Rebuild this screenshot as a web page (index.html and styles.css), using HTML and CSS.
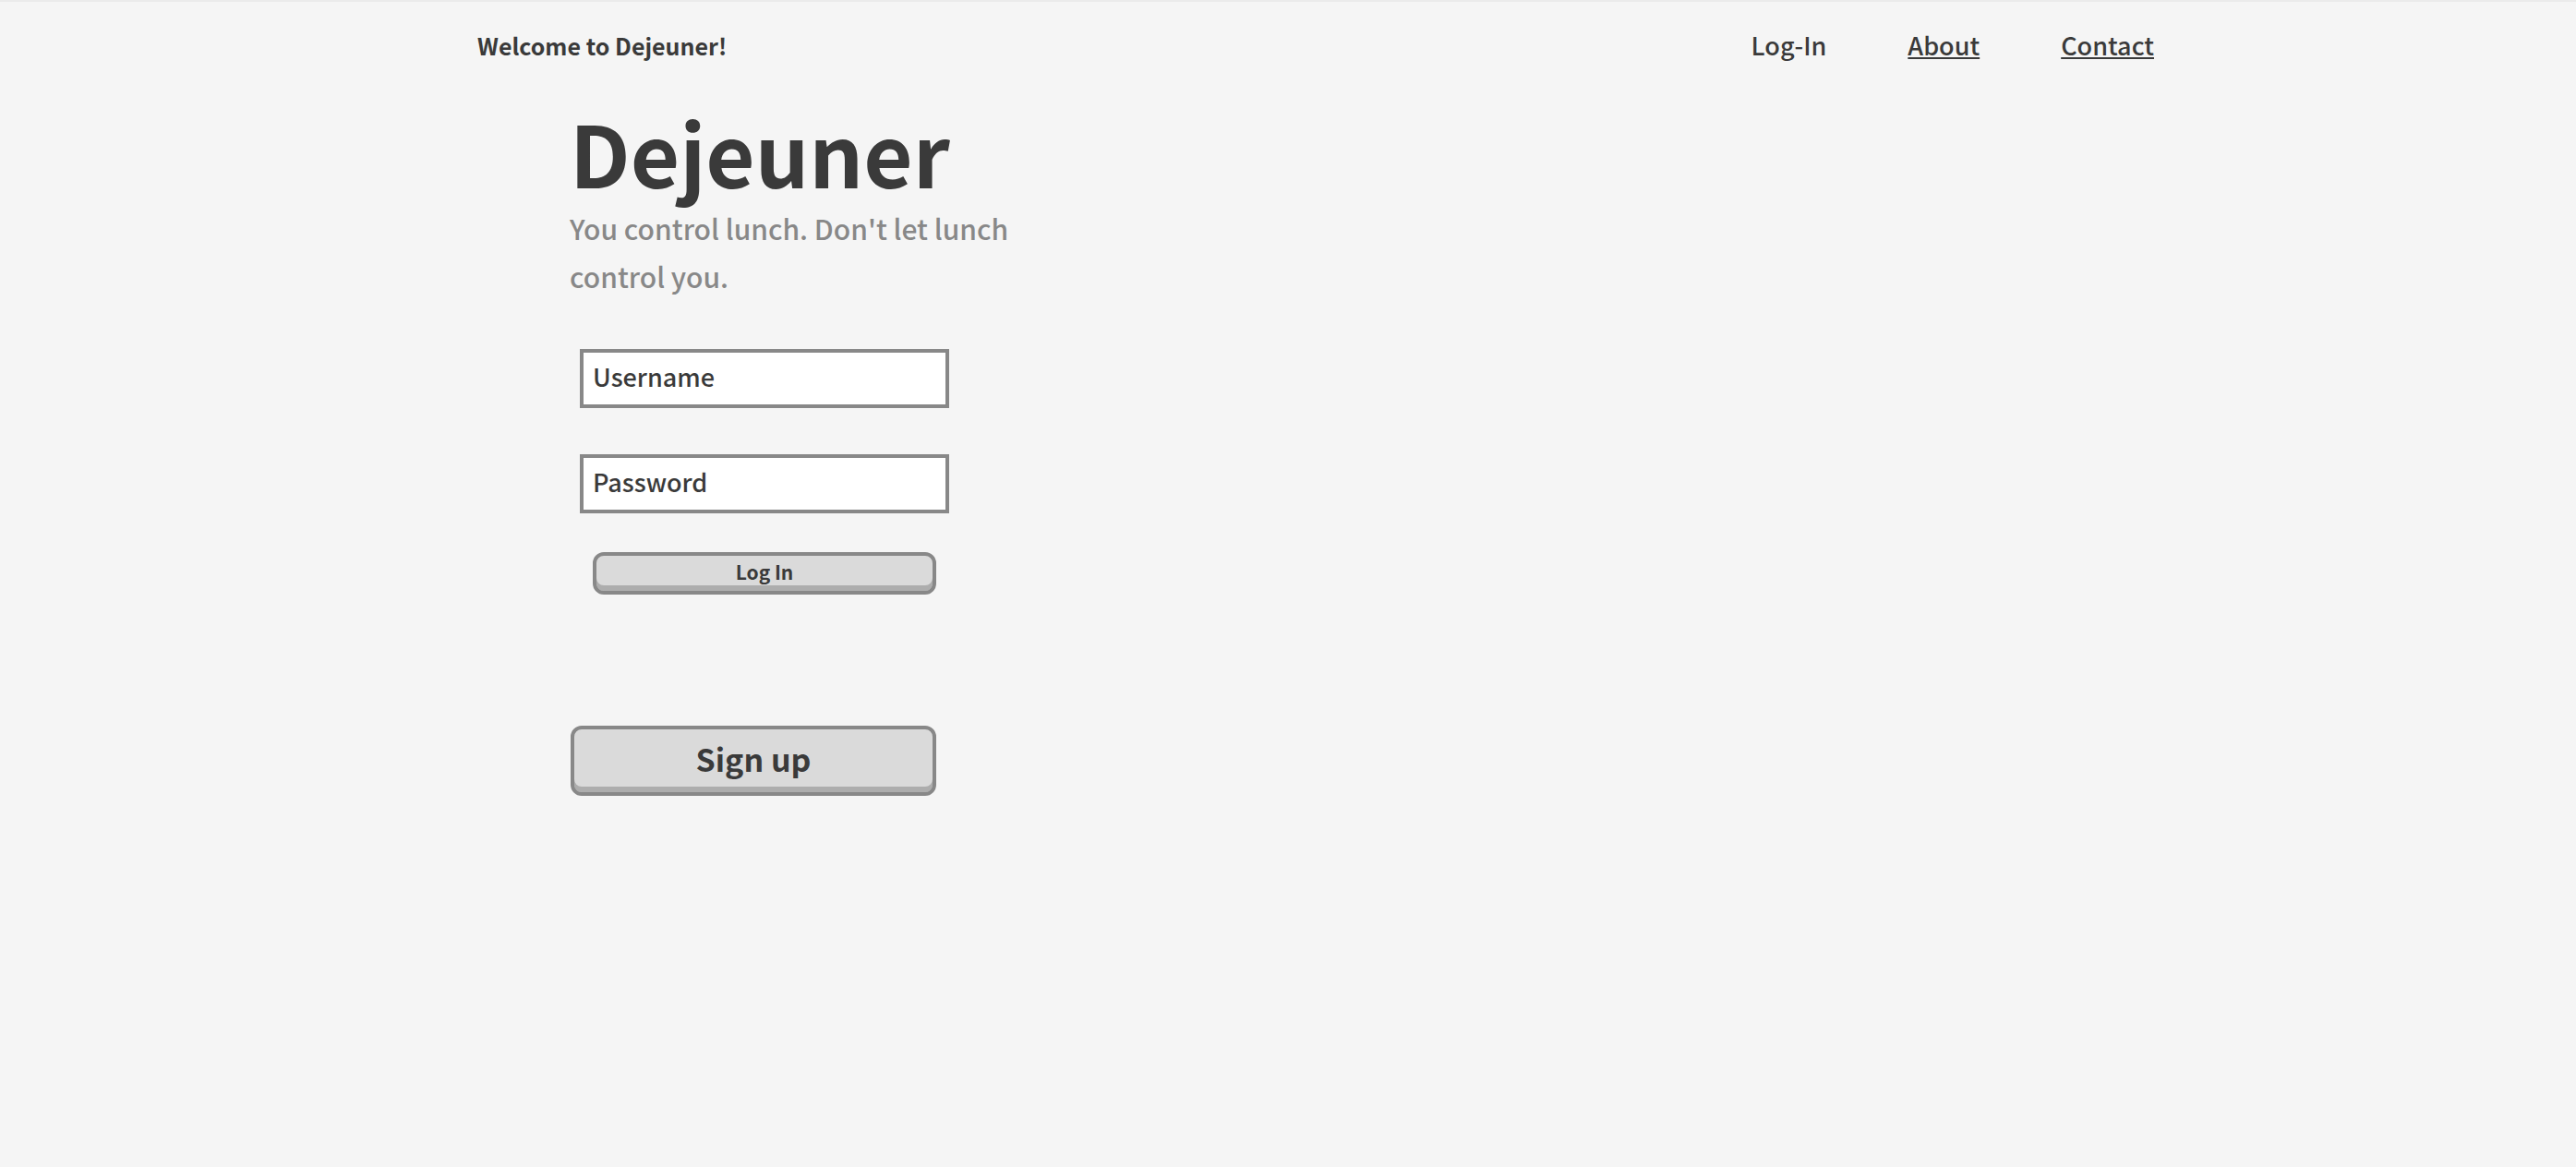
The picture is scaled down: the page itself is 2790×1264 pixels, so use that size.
FILE: index.html
```html
<!DOCTYPE html>
<html lang="en">
<head>
<meta charset="utf-8">
<title>Dejeuner</title>
<link rel="stylesheet" href="styles.css">
</head>
<body>
<header class="topbar">
  <p class="welcome">Welcome to Dejeuner!</p>
  <nav class="menu">
    <span>Log-In</span>
    <a href="#about">About</a>
    <a href="#contact">Contact</a>
  </nav>
</header>
<main class="content">
  <h1 class="title">Dejeuner</h1>
  <p class="tagline">You control lunch. Don't let lunch control you.</p>
  <form class="login">
    <input class="field" type="text" placeholder="Username" aria-label="Username">
    <input class="field" type="password" placeholder="Password" aria-label="Password">
    <button class="button button-login" type="submit">Log In</button>
  </form>
  <button class="button button-signup" type="button">Sign up</button>
</main>
</body>
</html>
```
FILE: styles.css
```css
* {
  box-sizing: border-box;
}

body {
  margin: 0;
  border-top: 2px solid #ebebeb;
  background: #f5f5f5;
  color: #3a3a3a;
  font-family: "Noto Sans CJK SC", "Open Sans", sans-serif;
  font-size: 27px;
  font-weight: 500;
}

h1,
p {
  margin: 0;
}

.topbar {
  display: flex;
  justify-content: space-between;
  padding: 27px 457px 0 517px;
  line-height: 40px;
}

.welcome {
  font-size: 25px;
  font-weight: 700;
}

.menu {
  display: flex;
  gap: 88px;
}

.menu a {
  color: inherit;
  text-underline-offset: 2px;
  text-decoration-thickness: 2px;
  text-decoration-skip-ink: none;
}

.content {
  padding: 47px 0 80px 617px;
}

.title {
  font-size: 92px;
  line-height: 96px;
  font-weight: 700;
}

.tagline {
  max-width: 500px;
  margin-top: 9px;
  color: #888;
  font-size: 30px;
  line-height: 52px;
}

.login {
  display: flex;
  flex-direction: column;
  width: 100%;
  max-width: 422px;
  padding: 0 11px;
  margin-top: 53px;
}

.field {
  height: 64px;
  margin-bottom: 50px;
  padding: 0 10px 6px;
  border: 4px solid #888;
  border-radius: 0;
  background: #fff;
  color: inherit;
  font: inherit;
}

.field::placeholder {
  color: #3a3a3a;
  opacity: 1;
}

.button {
  display: block;
  padding: 0 0 4px;
  border: 4px solid #888;
  border-radius: 12px;
  background: #dadada;
  box-shadow: inset 0 -6px #adadad;
  color: inherit;
  font-family: inherit;
  font-weight: 700;
}

.button-login {
  height: 46px;
  margin: -8px 14px 0;
  font-size: 21px;
  line-height: 32px;
}

.button-signup {
  width: 396px;
  height: 76px;
  margin-top: 142px;
  margin-left: 1px;
  font-size: 34px;
  line-height: 56px;
}
```
